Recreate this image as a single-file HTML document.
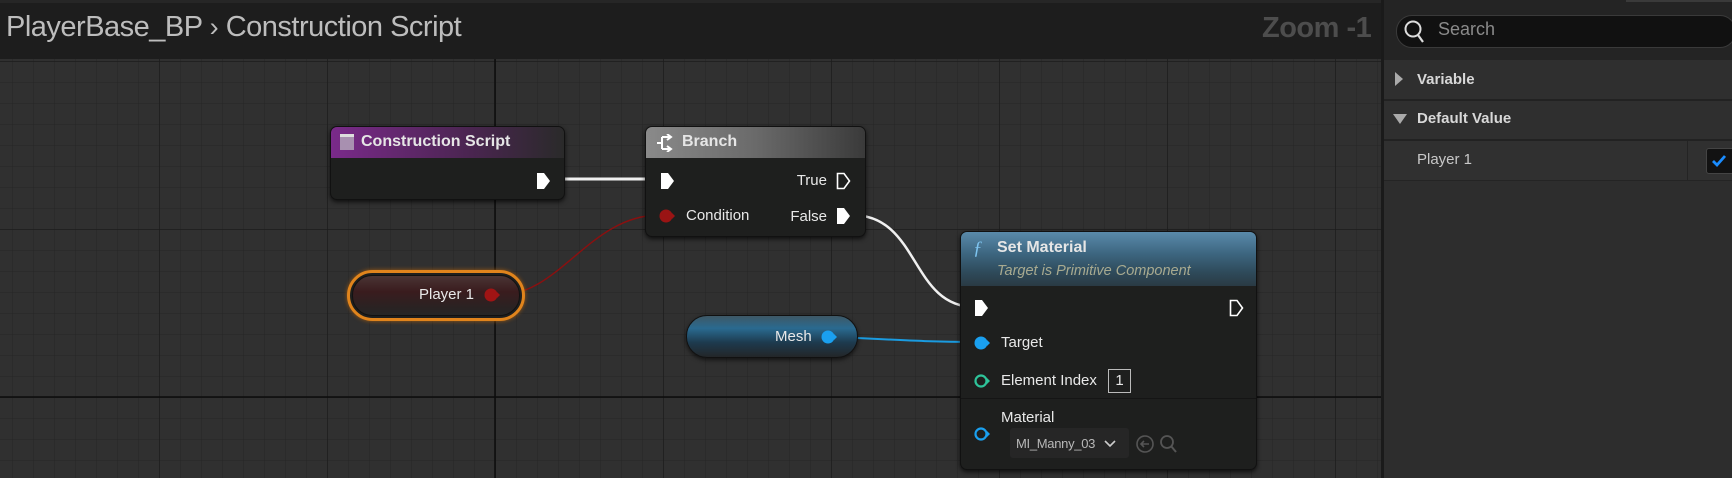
<!DOCTYPE html>
<html><head><meta charset="utf-8"><style>
*{margin:0;padding:0;box-sizing:border-box}
body{width:1732px;height:478px;overflow:hidden;background:#2f2f2f;font-family:"Liberation Sans",sans-serif;position:relative}
.a{position:absolute}
.node{position:absolute;background:#1e1f1e;border-radius:7px;box-shadow:0 2px 5px rgba(0,0,0,.7);border:1px solid #111}
.hdr{position:absolute;left:0;right:0;top:0;border-radius:6px 6px 0 0;color:#e6e6e6;font-weight:bold;font-size:16px}
.t{position:absolute;color:#e8e8e8;font-size:15px;white-space:nowrap}
</style></head><body>
<svg class="a" style="left:0;top:0" width="1384" height="478">
<defs>
<pattern id="mn" width="21" height="21" patternUnits="userSpaceOnUse" x="12" y="19"><path d="M0 0H21M0 0V21" stroke="#262626" stroke-width="1" fill="none"/></pattern>
<pattern id="mj" width="168" height="168" patternUnits="userSpaceOnUse" x="159" y="61"><path d="M0 0H168M0 0V168" stroke="#1c1c1c" stroke-width="1.5" fill="none"/></pattern>
</defs>
<rect width="1384" height="478" fill="#303030"/>
<rect width="1384" height="478" fill="url(#mn)"/>
<rect width="1384" height="478" fill="url(#mj)"/>
<line x1="495" y1="0" x2="495" y2="478" stroke="#0c0c0c" stroke-width="1.5"/>
<line x1="0" y1="397" x2="1384" y2="397" stroke="#0c0c0c" stroke-width="1.5"/>
<path d="M553 179H658" stroke="#f0f0f0" stroke-width="3" fill="none"/>
<path d="M500 295C560 295 590 215 660 215" stroke="#8a1010" stroke-width="1.5" fill="none"/>
<path d="M852 215C920 215 910 307 975 307" stroke="#f0f0f0" stroke-width="2.5" fill="none"/>
<path d="M836 337C900 340 930 342 975 342" stroke="#1a9be0" stroke-width="2" fill="none"/>
</svg>
<div class="a" style="left:0;top:0;width:1384px;height:59px;background:#1d1d1d"></div>
<div class="a" style="left:0;top:0;width:1384px;height:3px;background:#262626"></div>
<div class="a" style="left:6px;top:11px;color:#bdbdbd;font-size:29px;letter-spacing:-0.5px;white-space:nowrap">PlayerBase_BP <span style="font-size:27px">&#8250;</span> Construction Script</div>
<div class="a" style="left:1262px;top:12px;color:#4d4d4d;font-size:29px;font-weight:bold;letter-spacing:-0.5px">Zoom -1</div>

<!-- Construction Script -->
<div class="node" style="left:330px;top:126px;width:235px;height:74px">
<div class="hdr" style="height:31px;background:linear-gradient(90deg,#7a2a8a,#4a2550 60%,#2a2a2a)"><div class="a" style="left:9px;top:7px;width:14px;height:16px;background:#a890b0;border-top:3px solid #ddd"></div><span class="a" style="left:30px;top:6px">Construction Script</span></div>
<svg class="a" style="left:205px;top:45px" width="16" height="18"><path d="M1 1H8L14 9L8 17H1Z" fill="#fff"/></svg>
</div>

<!-- Branch -->
<div class="node" style="left:645px;top:126px;width:221px;height:111px">
<div class="hdr" style="height:31px;background:linear-gradient(90deg,#8a8a8a,#6a6a6a 50%,#3a3a3a)"><svg class="a" style="left:10px;top:7px" width="18" height="18"><path d="M1 9H6M6 3V15M6 3H14M6 15H14M11 0L15 3L11 6M11 12L15 15L11 18" stroke="#fff" stroke-width="2" fill="none"/></svg><span class="a" style="left:36px;top:6px">Branch</span></div>
<svg class="a" style="left:14px;top:45px" width="16" height="18"><path d="M1 1H8L14 9L8 17H1Z" fill="#fff"/></svg>
<span class="t" style="right:38px;top:45px">True</span>
<svg class="a" style="left:190px;top:45px" width="16" height="18"><path d="M1.5 1.5H8L13.5 9L8 16.5H1.5Z" stroke="#fff" stroke-width="1.6" fill="none"/></svg>
<svg class="a" style="left:12px;top:80px" width="18" height="18"><circle cx="8" cy="9" r="6.5" fill="#9a1414"/><path d="M14 6L17 9L14 12Z" fill="#9a1414"/></svg>
<span class="t" style="left:40px;top:80px">Condition</span>
<span class="t" style="right:38px;top:81px">False</span>
<svg class="a" style="left:190px;top:80px" width="16" height="18"><path d="M1 1H8L14 9L8 17H1Z" fill="#fff"/></svg>
</div>

<!-- Player 1 -->
<div class="a" style="left:347px;top:270px;width:178px;height:51px;border-radius:26px;border:3px solid #e0841c;background:#1e1f1e;box-shadow:0 0 4px #a05a10"></div>
<div class="a" style="left:352px;top:275px;width:168px;height:41px;border-radius:20px;background:linear-gradient(180deg,#4a3434,#3a1c1e 40%,#2a2222 80%,#262626);border:1px solid #111"></div>
<span class="t" style="left:419px;top:286px">Player 1</span>
<svg class="a" style="left:483px;top:287px" width="18" height="16"><circle cx="8" cy="8" r="6.5" fill="#a01414"/><path d="M14 5L17 8L14 11Z" fill="#a01414"/></svg>

<!-- Mesh -->
<div class="a" style="left:686px;top:315px;width:172px;height:43px;border-radius:21px;background:linear-gradient(180deg,#3e5866,#2a6a90 30%,#1d3a4e 65%,#232628);border:1px solid #111;box-shadow:0 2px 4px rgba(0,0,0,.6)"></div>
<span class="t" style="left:775px;top:328px">Mesh</span>
<svg class="a" style="left:820px;top:329px" width="18" height="16"><circle cx="8" cy="8" r="6.5" fill="#1aa0f0"/><path d="M14 5L17 8L14 11Z" fill="#1aa0f0"/></svg>

<!-- Set Material -->
<div class="node" style="left:960px;top:231px;width:297px;height:239px">
<div class="hdr" style="height:54px;background:linear-gradient(180deg,#5a8aaa,#3d6680 40%,#2e4a5a 75%,#2a3a44)">
<span class="a" style="left:12px;top:6px;color:#7ec4f0;font-style:italic;font-family:'Liberation Serif',serif;font-size:19px;font-weight:normal">&#402;</span>
<span class="a" style="left:36px;top:7px">Set Material</span>
<span class="a" style="left:36px;top:31px;font-weight:normal;font-style:italic;font-size:14.5px;color:#a8aa90">Target is Primitive Component</span></div>
<svg class="a" style="left:13px;top:67px" width="16" height="18"><path d="M1 1H8L14 9L8 17H1Z" fill="#fff"/></svg>
<svg class="a" style="left:268px;top:67px" width="16" height="18"><path d="M1.5 1.5H8L13.5 9L8 16.5H1.5Z" stroke="#fff" stroke-width="1.6" fill="none"/></svg>
<svg class="a" style="left:12px;top:102px" width="18" height="18"><circle cx="8" cy="9" r="6.5" fill="#1aa0f0"/><path d="M14 6L17 9L14 12Z" fill="#1aa0f0"/></svg>
<span class="t" style="left:40px;top:102px">Target</span>
<svg class="a" style="left:12px;top:140px" width="18" height="18"><circle cx="8" cy="9" r="5.5" stroke="#2ec49a" stroke-width="2.2" fill="none"/><path d="M14 6L17 9L14 12Z" fill="#2ec49a"/></svg>
<span class="t" style="left:40px;top:140px">Element Index</span>
<div class="a" style="left:147px;top:137px;width:23px;height:24px;border:1.5px solid #bbb;color:#e8e8e8;font-size:15px;text-align:center;line-height:21px">1</div>
<div class="a" style="left:0;right:0;top:166px;height:1px;background:#151515"></div>
<span class="t" style="left:40px;top:177px">Material</span>
<svg class="a" style="left:12px;top:193px" width="18" height="18"><circle cx="8" cy="9" r="5.5" stroke="#1aa0f0" stroke-width="2.2" fill="none"/><path d="M14 6L17 9L14 12Z" fill="#1aa0f0"/></svg>
<div class="a" style="left:49px;top:196px;width:119px;height:30px;background:#262626;border-radius:3px"></div>
<span class="t" style="left:55px;top:204px;font-size:13px;color:#b8b8b8;letter-spacing:-0.3px">MI_Manny_03</span>
<svg class="a" style="left:143px;top:207px" width="12" height="10"><path d="M1 2L6 7L11 2" stroke="#ccc" stroke-width="1.6" fill="none"/></svg>
<svg class="a" style="left:175px;top:201px" width="42" height="22"><circle cx="9" cy="11" r="8" stroke="#555" stroke-width="1.6" fill="none"/><path d="M13 11H5M8 8L5 11L8 14" stroke="#555" stroke-width="1.6" fill="none"/><circle cx="31" cy="9" r="6" stroke="#555" stroke-width="1.8" fill="none"/><path d="M35 13L40 19" stroke="#555" stroke-width="2"/></svg>
</div>

<!-- Right panel -->
<div class="a" style="left:1381px;top:0;width:3px;height:478px;background:#1a1a1a"></div>
<div class="a" style="left:1384px;top:0;width:348px;height:478px;background:#2d2d2d"></div>
<div class="a" style="left:1384px;top:0;width:348px;height:60px;background:#242424"></div>
<div class="a" style="left:1626px;top:0;width:106px;height:2px;background:#3a3a3a"></div>
<div class="a" style="left:1396px;top:15px;width:340px;height:33px;background:#111;border-radius:16px;border:1px solid #3a3a3a"></div>
<svg class="a" style="left:1403px;top:19px" width="24" height="26"><circle cx="10" cy="10" r="7.5" stroke="#ddd" stroke-width="2" fill="none"/><path d="M15 16L20 23" stroke="#ddd" stroke-width="2.2"/></svg>
<span class="a" style="left:1438px;top:19px;font-size:18px;color:#8a8a8a">Search</span>
<div class="a" style="left:1384px;top:60px;width:348px;height:39px;background:#2f2f2f"></div>
<div class="a" style="left:1384px;top:99px;width:348px;height:2px;background:#222"></div>
<div class="a" style="left:1384px;top:101px;width:348px;height:38px;background:#2f2f2f"></div>
<div class="a" style="left:1384px;top:139px;width:348px;height:2px;background:#222"></div>
<div class="a" style="left:1384px;top:141px;width:348px;height:39px;background:#303030"></div>
<div class="a" style="left:1384px;top:180px;width:348px;height:1px;background:#242424"></div>
<div class="a" style="left:1687px;top:141px;width:1px;height:39px;background:#242424"></div>
<svg class="a" style="left:1394px;top:71px" width="10" height="16"><path d="M1 1L9 8L1 15Z" fill="#aaa"/></svg>
<span class="a" style="left:1417px;top:71px;font-size:15px;font-weight:bold;color:#d8d8d8">Variable</span>
<svg class="a" style="left:1392px;top:113px" width="16" height="12"><path d="M1 1H15L8 11Z" fill="#aaa"/></svg>
<span class="a" style="left:1417px;top:110px;font-size:15px;font-weight:bold;color:#d8d8d8">Default Value</span>
<span class="a" style="left:1417px;top:151px;font-size:15px;color:#c8c8c8">Player 1</span>
<div class="a" style="left:1706px;top:148px;width:30px;height:26px;background:#121212;border:1px solid #444;border-radius:3px"></div>
<svg class="a" style="left:1710px;top:152px" width="18" height="18"><path d="M3 9L7 13L15 4" stroke="#1a8cff" stroke-width="2.8" fill="none"/></svg>
</body></html>
